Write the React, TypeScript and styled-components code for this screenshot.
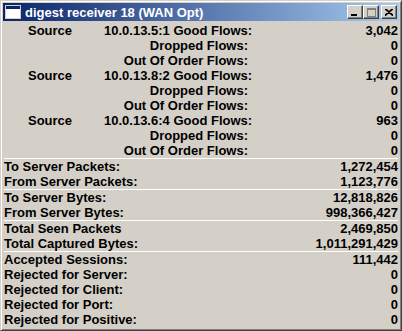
import styled, { createGlobalStyle } from "styled-components";

const GlobalStyle = createGlobalStyle`
  html, body {
    margin: 0;
    padding: 0;
    background: #d4d0c8;
  }
  * {
    box-sizing: border-box;
  }
`;

// classic win2000 frame
const Window = styled.div`
  width: 402px;
  height: 331px;
  background: #d4d0c8;
  border: 1px solid;
  border-color: #d4d0c8 #404040 #404040 #d4d0c8;
  box-shadow: inset 1px 1px 0 #ffffff, inset -1px -1px 0 #808080;
  padding: 2px;
  display: flex;
  flex-direction: column;
  font-family: "Liberation Sans", Arial, sans-serif;
  overflow: hidden;
`;

const TitleBar = styled.div`
  height: 18px;
  flex: none;
  display: flex;
  align-items: center;
  padding: 0 2px 0 2px;
  gap: 4px;
  background: linear-gradient(90deg, #0a246a 0%, #a6caf0 100%);
`;

const TitleText = styled.span`
  flex: 1;
  color: #ffffff;
  font-weight: bold;
  font-size: 13px;
  white-space: nowrap;
`;

const Caption = styled.div`
  display: flex;
  align-items: center;
`;

const CapButton = styled.div<{ $gapLeft?: boolean }>`
  width: 16px;
  height: 14px;
  margin-left: ${(p) => (p.$gapLeft ? "2px" : "0")};
  background: #d4d0c8;
  border: 1px solid;
  border-color: #ffffff #404040 #404040 #ffffff;
  box-shadow: inset -1px -1px 0 #808080;
  display: grid;
  place-content: center;
`;

const Body = styled.div`
  flex: 1;
  display: flex;
  flex-direction: column;
  padding: 2px 1px 0 1px;
  font-size: 13px;
  font-weight: bold;
  color: #000000;
`;

const Group = styled.div<{ $first?: boolean }>`
  border-top: ${(p) => (p.$first ? "none" : "1px solid #ffffff")};
`;

const Row = styled.div`
  height: 15px;
  display: flex;
  align-items: center;
  white-space: nowrap;
  line-height: 15px;
`;

const SourceWord = styled.span`
  width: 100px;
  padding-left: 24px;
`;

const FlowLabel = styled.span<{ $indent?: boolean }>`
  width: ${(p) => (p.$indent ? "244px" : "144px")};
  text-align: right;
`;

const Label = styled.span`
  flex: 1;
`;

const Value = styled.span`
  flex: 1;
  text-align: right;
`;

const Icon = () => (
  <svg width="16" height="14" viewBox="0 0 16 14">
    <rect x="0.5" y="0.5" width="15" height="13" fill="#ffffff" stroke="#d4d0c8" />
    <rect x="1" y="1" width="14" height="3" fill="#0a246a" />
  </svg>
);

const sources = [
  { id: "10.0.13.5:1", good: "3,042" },
  { id: "10.0.13.8:2", good: "1,476" },
  { id: "10.0.13.6:4", good: "963" },
];

const groups = [
  [
    ["To Server Packets:", "1,272,454"],
    ["From Server Packets:", "1,123,776"],
  ],
  [
    ["To Server Bytes:", "12,818,826"],
    ["From Server Bytes:", "998,366,427"],
  ],
  [
    ["Total Seen Packets", "2,469,850"],
    ["Total Captured Bytes:", "1,011,291,429"],
  ],
  [
    ["Accepted Sessions:", "111,442"],
    ["Rejected for Server:", "0"],
    ["Rejected for Client:", "0"],
    ["Rejected for Port:", "0"],
    ["Rejected for Positive:", "0"],
  ],
];

export default function App() {
  return (
    <>
      <GlobalStyle />
      <Window>
        <TitleBar>
          <Icon />
          <TitleText>digest receiver 18 (WAN Opt)</TitleText>
          <Caption>
            <CapButton>
              <svg width="8" height="8" viewBox="0 0 8 8">
                <rect x="0" y="6" width="6" height="2" fill="#000" />
              </svg>
            </CapButton>
            <CapButton>
              <svg width="9" height="9" viewBox="0 0 9 9">
                <rect x="0.5" y="0.5" width="8" height="8" fill="none" stroke="#808080" />
                <rect x="0" y="1" width="9" height="1" fill="#808080" />
              </svg>
            </CapButton>
            <CapButton $gapLeft>
              <svg width="8" height="7" viewBox="0 0 8 7">
                <path d="M0 0 L8 7 M1 0 L8 6 M8 0 L0 7 M7 0 L0 6" stroke="#000" strokeWidth="1.1" />
              </svg>
            </CapButton>
          </Caption>
        </TitleBar>
        <Body>
          <Group $first>
            {sources.map((s) => (
              <div key={s.id}>
                <Row>
                  <SourceWord>Source</SourceWord>
                  <FlowLabel>{s.id} Good Flows:</FlowLabel>
                  <Value>{s.good}</Value>
                </Row>
                <Row>
                  <FlowLabel $indent>Dropped Flows:</FlowLabel>
                  <Value>0</Value>
                </Row>
                <Row>
                  <FlowLabel $indent>Out Of Order Flows:</FlowLabel>
                  <Value>0</Value>
                </Row>
              </div>
            ))}
          </Group>
          {groups.map((g, i) => (
            <Group key={i}>
              {g.map(([label, value]) => (
                <Row key={label}>
                  <Label>{label}</Label>
                  <Value>{value}</Value>
                </Row>
              ))}
            </Group>
          ))}
        </Body>
      </Window>
    </>
  );
}
